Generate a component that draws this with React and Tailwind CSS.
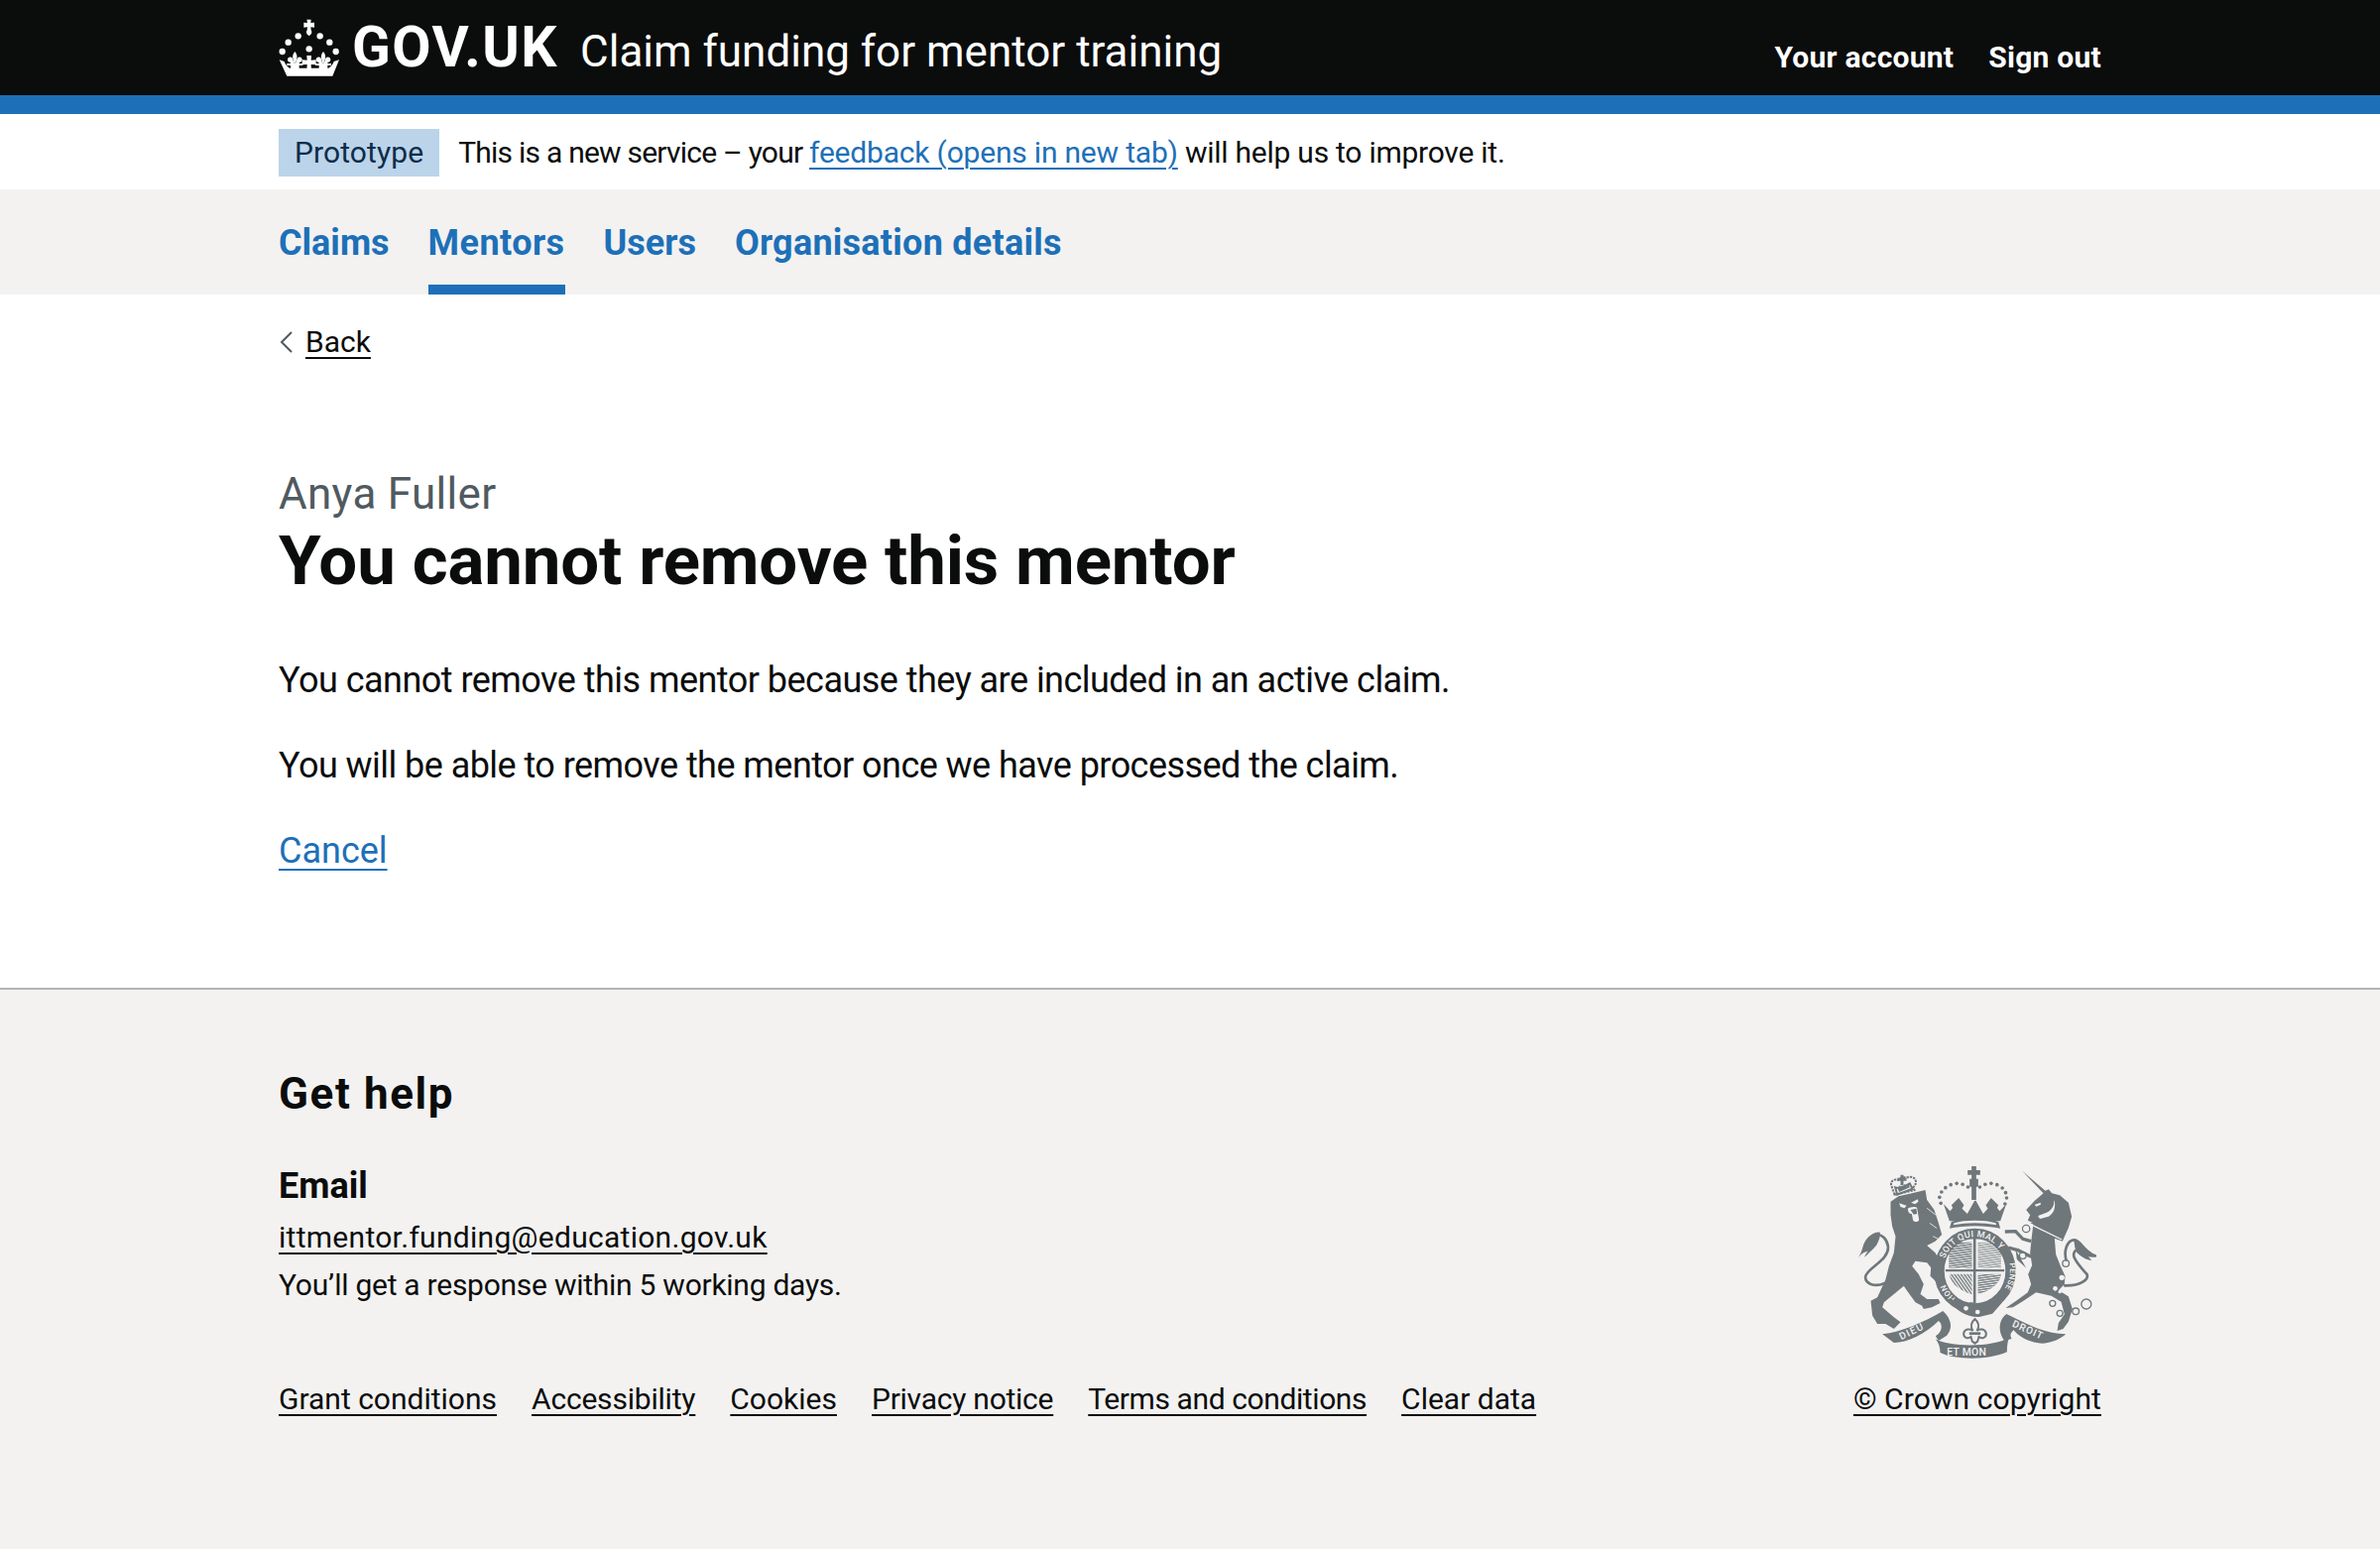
const font = "font-['Roboto','Noto_Sans',sans-serif]";

function Fleur({ x }) {
  return (
    <g transform={`translate(${x} 0)`}>
      <path d="M0 112c-7 8-8 16-5 24l2 9h6l2-9c3-8 2-16-5-24z" />
      <path d="M-7 132c-6-6-15-3-15 5 0 5 4 8 8 7l1 4c-5 0-9 0-11-1v7h11v12h26v-12h11v-7c-2 1-6 1-11 1l1-4c4 1 8-2 8-7 0-8-9-11-15-5l-4 14h-6z" />
    </g>
  );
}

function Crown() {
  const dots = [[28,84],[58,65],[124,65],[153,84],[10,112],[172,112],[91,104]];
  return (
    <svg viewBox="0 13 184 174" className="w-[62px] h-[58px] shrink-0" fill="#fff">
      <path d="M84 15h13l-1 10 11-1v15l-11-1 1 9c4 6 3 12-6 18-9-6-10-12-6-18l1-9-11 1V24l11 1z" />
      {dots.map(([x, y], i) => <circle key={i} cx={x} cy={y} r="9.500" />)}
      <path d="M84 124h14l-1 14 15-1v15l-15-1 1 20H84l1-20-15 1v-15l15 1z" />
      <Fleur x={48} />
      <Fleur x={134} />
      <path d="M1 137l15 5c3 9 8 15 16 20h118c8-5 13-11 16-20l16-5-20 49H24z" />
    </svg>
  );
}

function Arms() {
  const c = "#6f777b";
  const bg = "#f3f2f1";
  const beads = [[352,190],[348,172],[354,156],[366,143],[382,134],[400,130],[418,133],[434,141],[470,141],[486,133],[504,130],[522,134],[538,144],[548,158],[551,174],[546,192]];
  return (
    <svg viewBox="100 75 722 588" className="w-[241px] h-[196px]" fill={c}>
      <pattern id="hatch" width="7" height="7" patternUnits="userSpaceOnUse" patternTransform="rotate(-8)">
        <path d="M0 0h7v4H0z" fill={c} />
      </pattern>
      <pattern id="diag" width="8" height="8" patternUnits="userSpaceOnUse" patternTransform="rotate(-35)">
        <path d="M0 0h4v8H0z" fill={c} />
      </pattern>

      {/* lion */}
      <g transform="translate(60 60)">
        <path d="M122 372C90 386 62 372 64 352c4-26 74-50 68-92-3-22-18-36-34-34" fill="none" stroke={c} strokeWidth="8" />
        <path d="M108 218c-24-2-46 20-52 44-3 12-8 24-14 33 8-12 18-18 30-20-5 5-9 10-11 18 10-10 24-22 36-36 8-14 12-26 11-39z" />
        <path d="M140 125l24-16 34-8 47-11 5 30 22 30 13 40 10 35-20 20-25 13 25 22 20 35 7 30-22 25-20-20 2-25-12-15-35-5-10 15 20 25 15 30-10 30 20 15h35l5 12-25 13-25 5-5-10-20-10-25-35-10-15-30 25-30 25-5 15 35 30 20 15-20 20-25-15h-25l-15-25-5-45 20-10 25-55 10-40 15-40 5-50-10-30-5-35z" />
        <path d="M166 130l22 7-6 8-12-4zM222 118l-20 10 12 5 10-8z" fill={bg} />
        <path d="M192 146c6-4 22-8 28-2l6 36c-2 8-14 8-18 2l-4-20c-8 0-12-8-12-16z" fill={bg} />
        <path d="M200 150l18-4 2 16-10 2z" />
        <path d="M250 145l26 20M258 190l22 16M268 230l16 8" stroke={bg} strokeWidth="2.500" />
        <path d="M152 104l-10-28c-4-14 10-20 20-16 4-6 18-10 28-8 12-4 24 0 26 10 2 8-2 14-8 20l4 8z" fill="none" stroke={c} strokeWidth="6" strokeDasharray="7 3" />
        <path d="M170 44h9v9h9v9h-9v14h-9V62h-9v-9h9z" />
        <path d="M154 82c12 4 28-2 44-12l8 16-46 18z" fill="none" stroke={c} strokeWidth="6" />
        <path d="M162 86l6-10 6 8 8-12 6 8 6-10 4 12-32 14z" />
      </g>

      {/* unicorn */}
      <g transform="translate(450 60)">
        <path d="M282 305c-10-30 2-62 22-64 20-2 26 32 64 48-12 2-26-4-34-14 2 8 8 14 14 22-14-4-30-18-36-26-8 4-10 16-6 24 8 18 24 34 38 50 6 14-16 36-70 34" fill="none" stroke={c} strokeWidth="8" />
        <path d="M304 240c20-2 30 30 66 50-14 2-30-6-38-14 2 10 8 16 16 24-18-6-34-22-40-34z" />
        <path d="M148 32L218 92L228 88L238 100L262 106L288 128L298 170L288 205L280 222L270 245L246 236L250 285L264 320L278 350L276 375L258 394L288 412L300 450L288 488L272 510L254 516L258 492L276 466L266 428L236 410L190 400L152 425L120 445L98 447L130 425L165 400L175 375L166 345L178 318L172 280L176 240L182 190L165 182L172 166L160 150L186 122L212 100Z" />
        <path d="M175 245L150 238L128 215L96 216" fill="none" stroke={c} strokeWidth="10" />
        <path d="M175 292L135 272L106 264" fill="none" stroke={c} strokeWidth="10" />
        <path d="M128 270L160 326L132 300z" />
        <path d="M244 122c2 14-6 28-22 36l-26 10 4 10 28-8c14-8 22-24 18-46z" fill={bg} />
        <path d="M186 134l18-6 0 6-14 6z" fill={bg} />
        <path d="M182 188l4-10 6 8 8-12 8 12 6-10 8 12 8-10 6 14 6-8 8 14 8-6 8 18-8 16-86-36z" />
        <path d="M178 196l90 44" stroke={bg} strokeWidth="4" />
        <g fill="none" stroke={c} strokeWidth="4">
          <circle cx="160" cy="207" r="11" /><circle cx="150" cy="288" r="10" /><circle cx="240" cy="433" r="9" /><circle cx="262" cy="463" r="9" /><circle cx="310" cy="457" r="10" /><circle cx="342" cy="435" r="15" />
          <circle cx="280" cy="312" r="10" />
        </g>
        <g fill={bg}>
          <circle cx="150" cy="288" r="7" /><circle cx="160" cy="207" r="8" /><circle cx="268" cy="355" r="8" /><circle cx="248" cy="388" r="7" /><circle cx="262" cy="398" r="5" />
        </g>
      </g>

      {/* royal crown */}
      <path d="M445 78h14v12h12v14h-12v12h6v24h-6v40h-14v-40h-6v-24h6v-12h-12V90h12z" />
      {beads.map(([x, y], i) => <circle key={i} cx={x} cy={y} r="5.500" />)}
      <path d="M360 192l20 22 8-10-4-8 22-22 16 22-6 10 16 16 22-40 4 0 22 40 14-16-6-10 16-22 22 22-4 8 8 10 20-22-18 52H378z" />
      <path d="M384 246c36-12 108-12 142 0l6 20c-44-10-110-10-154 0z" />
      <path d="M392 250c32-10 94-10 126 0l2 6c-40-8-90-8-130 0z" fill={bg} />

      {/* shield */}
      <path d="M368 300h174v100c0 46-40 74-87 92-47-18-87-46-87-92z" fill={bg} />
      <path d="M376 308h70v78h-70z" fill="url(#hatch)" />
      <path d="M464 308h70v78h-70z" fill="url(#hatch)" opacity=".7" />
      <path d="M378 404h68v62c-30-10-66-30-68-62z" fill="url(#diag)" />
      <path d="M464 404h70c-2 32-38 52-70 62z" fill="url(#hatch)" />
      <path d="M450 296h8v196h-8zM366 390h178v7H366z" />

      {/* garter */}
      <ellipse cx="455" cy="395" rx="108" ry="113" fill="none" stroke={c} strokeWidth="31" />
      <defs>
        <path id="arcTop" d="M357 395A98 103 0 0 1 553 395" />
        <path id="arcR" d="M553 350A98 103 0 0 1 500 487" />
        <path id="arcL" d="M400 481A98 103 0 0 1 359 405" />
      </defs>
      <g fill={bg} fontFamily="Roboto, sans-serif" fontWeight="500">
        <text fontSize="27" letterSpacing="1"><textPath href="#arcTop" startOffset="12%">SOIT QUI MAL Y</textPath></text>
        <text fontSize="24" letterSpacing="1"><textPath href="#arcR" startOffset="14%">PENSE</textPath></text>
        <text fontSize="24" letterSpacing="1"><textPath href="#arcL" startOffset="6%">HON</textPath></text>
      </g>

      {/* buckle */}
      <path d="M384 476c14 30 50 52 88 44l34-16 26-22 6 8-30 34-40 10c-36 2-72-20-92-52z" />
      <path d="M436 490h10l34 12 30-20 6 8-36 24z" />
      <circle cx="428" cy="508" r="7" fill={bg} /><circle cx="463" cy="519" r="7" fill={bg} />

      {/* fleur */}
      <path d="M455 540c-14 12-12 26-6 36-8-8-26-6-28 8-1 12 12 18 22 10l4 14 8 6 8-6 4-14c10 8 23 2 22-10-2-14-20-16-28-8 6-10 8-24-6-36z" fill={bg} stroke={c} strokeWidth="6" />
      <path d="M438 580h34v8h-34z" />

      {/* motto */}
      <path d="M175 586C232 580 300 550 358 516C380 535 392 565 370 590L345 606L336 592C358 578 358 555 345 546C305 585 250 612 210 612Z" />
      <path d="M336 601C380 626 510 626 558 597C552 615 552 630 552 640C500 665 395 665 350 642C350 625 345 612 336 601Z" />
      <path d="M550 525C600 548 660 585 730 586C715 600 690 612 660 614C620 612 590 594 572 574C560 584 562 592 566 600L544 606C525 580 525 545 550 525Z" />
      <g fill={bg} fontFamily="Roboto, sans-serif" fontSize="30" fontWeight="500">
        <text x="232" y="604" transform="rotate(-26 232 604)" letterSpacing="4">DIEU</text>
        <text x="370" y="651" fontSize="31" letterSpacing="1">ET MON</text>
        <text x="566" y="562" transform="rotate(24 566 562)" letterSpacing="3">DROIT</text>
      </g>
    </svg>
  );
}

function FLink({ children, t = "" }) {
  return <a className={`underline underline-offset-[5px] decoration-2 text-[#0b0c0c] ${t}`}>{children}</a>;
}

export default function App() {
  return (
    <div className={`${font} text-[#0b0c0c] min-h-[1562px] flex flex-col bg-white`}>
      <header className="bg-[#0b0c0c] text-white border-b-[19px] border-[#1d70b8] h-[115px]">
        <div className="w-[1838px] mx-auto flex items-start h-[96px]">
          <div className="flex items-center gap-[12px] pt-[13px]">
            <Crown />
            <span className="text-[57px] leading-[70px] font-bold tracking-[1.5px]">GOV.UK</span>
          </div>
          <span className="ml-[22px] mt-[24px] text-[44px] leading-[56px]">Claim funding for mentor training</span>
          <nav className="ml-auto flex gap-[35px] mt-[37px] text-[30px] leading-[42px] font-bold tracking-[0.25px]">
            <a>Your account</a>
            <a>Sign out</a>
          </nav>
        </div>
      </header>

      <div className="h-[76px] flex items-center">
        <div className="w-[1838px] mx-auto flex items-center gap-[19px] text-[30px] leading-[40px] pt-[2px]">
          <strong className="font-normal bg-[#bbd4ea] text-[#0c2d4a] px-[16px] h-[48px] flex items-center tracking-[0.1px]">Prototype</strong>
          <span><span className="tracking-[-0.77px]">This is a new service – your </span><a className="text-[#1d70b8] underline underline-offset-[5px] decoration-2 tracking-[-0.2px]">feedback (opens in new tab)</a><span className="tracking-[-0.25px]"> will help us to improve it.</span></span>
        </div>
      </div>

      <nav className="bg-[#f3f2f1] h-[106px]">
        <div className="w-[1838px] mx-auto flex gap-[39px] text-[36px] leading-[48px] font-bold text-[#1d70b8] h-full">
          <a className="pt-[30px]">Claims</a>
          <a className="pt-[30px] border-b-[10px] border-[#1d70b8] tracking-[0.45px]">Mentors</a>
          <a className="pt-[30px]">Users</a>
          <a className="pt-[30px] tracking-[0.25px]">Organisation details</a>
        </div>
      </nav>

      <main className="w-[1838px] mx-auto flex-1 pt-[28px]">
        <a className="flex items-center gap-[12px] text-[30px] leading-[40px]">
          <svg width="14" height="24" viewBox="0 0 14 24" fill="none" stroke="#505a5f" strokeWidth="2" className="ml-[1px]"><path d="M12 2L2 12l10 10" /></svg>
          <span className="underline underline-offset-[5px] decoration-2">Back</span>
        </a>
        <p className="mt-[105px] text-[44px] leading-[56px] text-[#505a5f] tracking-[0.3px]">Anya Fuller</p>
        <h1 className="text-[69px] leading-[80px] font-bold tracking-[-0.16px]">You cannot remove this mentor</h1>
        <p className="mt-[55px] text-[36px] leading-[50px] tracking-[-0.53px]">You cannot remove this mentor because they are included in an active claim.</p>
        <p className="mt-[36px] text-[36px] leading-[50px] tracking-[-0.55px]">You will be able to remove the mentor once we have processed the claim.</p>
        <p className="mt-[36px] text-[36px] leading-[50px]"><a className="text-[#1d70b8] underline underline-offset-[6px] decoration-2">Cancel</a></p>
      </main>

      <footer className="bg-[#f3f2f1] border-t-2 border-[#b1b4b6] h-[566px]">
        <div className="w-[1838px] mx-auto pt-[77px]">
          <h2 className="text-[44px] leading-[56px] font-bold tracking-[1.6px]">Get help</h2>
          <div className="flex justify-between items-end mt-[40px]">
            <div>
              <h3 className="text-[36px] leading-[50px] font-bold">Email</h3>
              <p className="mt-[5px] text-[30px] leading-[44px]"><FLink t="tracking-[0.28px]">ittmentor.funding@education.gov.uk</FLink></p>
              <p className="mt-[4px] text-[30px] leading-[44px] tracking-[-0.26px]">You’ll get a response within 5 working days.</p>
              <div className="flex gap-[35px] mt-[71px] text-[30px] leading-[44px]">
                <FLink>Grant conditions</FLink>
                <FLink t="tracking-[-0.2px]">Accessibility</FLink>
                <FLink>Cookies</FLink>
                <FLink t="tracking-[-0.25px]">Privacy notice</FLink>
                <FLink t="tracking-[-0.4px]">Terms and conditions</FLink>
                <FLink>Clear data</FLink>
              </div>
            </div>
            <div className="flex flex-col items-center">
              <Arms />
              <p className="mt-[18px] text-[30px] leading-[44px]"><FLink t="tracking-[0.1px]">© Crown copyright</FLink></p>
            </div>
          </div>
        </div>
      </footer>
    </div>
  );
}
